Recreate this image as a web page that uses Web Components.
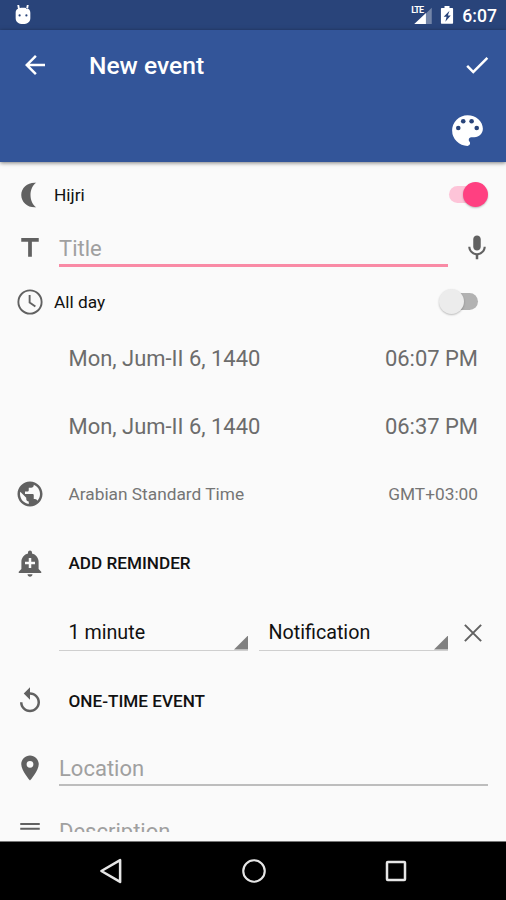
<!DOCTYPE html>
<html lang="en">
<head>
<meta charset="utf-8">
<title>New event</title>
<style>
    html, body { margin: 0; height: 100%; overflow: hidden; }
    body { font-family: Roboto, "Liberation Sans", sans-serif; background: #fafafa; }
</style>
</head>
<body>
<event-screen></event-screen>
<script>
class BaseElement extends HTMLElement {
    constructor() {
        super();
        this.attachShadow({ mode: 'open' });
    }

    connectedCallback() {
        const template = document.createElement('template');
        template.innerHTML = `<style>${this.style_}</style>${this.html}`;
        this.shadowRoot.innerHTML = '';
        this.shadowRoot.appendChild(template.content.cloneNode(true));
    }

    get style_() { return ''; }
    get html() { return '<slot></slot>'; }
}

const ICONS = {
    back: '<path d="M20 11H7.83l5.59-5.59L12 4l-8 8 8 8 1.41-1.41L7.83 13H20v-2z"/>',
    check: '<path d="M9 16.17L4.83 12l-1.42 1.41L9 19 21 7l-1.41-1.41z"/>',
    palette: '<path d="M12 3a9 9 0 0 0 0 18c.83 0 1.5-.67 1.5-1.5 0-.39-.15-.74-.39-1.01-.23-.26-.38-.61-.38-.99 0-.83.67-1.5 1.5-1.5H16c2.76 0 5-2.24 5-5 0-4.42-4.03-8-9-8z"/><g fill="#29447a"><circle cx="6.6" cy="10.5" r="1.35"/><circle cx="9.5" cy="6.6" r="1.35"/><circle cx="14.4" cy="6.6" r="1.35"/><circle cx="17.4" cy="10.5" r="1.35"/></g>',
    moon: '<path d="M17 2.2C10.5 1.5 5 6 5 12s5.5 10.5 12 9.8C14.4 20.3 12.400 16.500 12.400 12s2-8.300 4.600-9.800z"/>',
    title: '<path d="M5 4v3h5.5v12h3V7H19V4z"/>',
    mic: '<path d="M12 14c1.66 0 2.99-1.34 2.99-3L15 5c0-1.66-1.34-3-3-3S9 3.34 9 5v6c0 1.66 1.34 3 3 3zm5.3-3c0 3-2.54 5.1-5.3 5.1S6.7 14 6.7 11H5c0 3.41 2.72 6.23 6 6.72V21h2v-3.28c3.28-.48 6-3.3 6-6.72h-1.7z"/>',
    clock: '<g fill="none" stroke="currentColor" stroke-width="1.5"><circle cx="12" cy="12" r="9.3"/><path d="M11.7 6.4v6l4.6 3.2"/></g>',
    globe: '<path d="M12 2C6.48 2 2 6.48 2 12s4.48 10 10 10 10-4.48 10-10S17.52 2 12 2zm-1 17.93c-3.95-.49-7-3.85-7-7.93 0-.62.08-1.21.21-1.79L9 15v1c0 1.1.9 2 2 2v1.93zm6.9-2.54c-.26-.81-1-1.39-1.9-1.39h-1v-3c0-.55-.45-1-1-1H8v-2h2c.55 0 1-.45 1-1V7h2c1.1 0 2-.9 2-2v-.41c2.93 1.19 5 4.06 5 7.41 0 2.08-.8 3.97-2.1 5.39z"/>',
    alert: '<path d="M10.01 21.01c0 1.1.89 1.99 1.99 1.99s1.99-.89 1.99-1.99h-3.98zm8.87-4.19V11c0-3.25-2.25-5.97-5.29-6.69v-.72C13.59 2.71 12.88 2 12 2s-1.59.71-1.59 1.59v.72C7.37 5.03 5.12 7.75 5.12 11v5.82L3 18.94V20h18v-1.06l-2.12-2.12zM16 13.01h-3v3h-2v-3H8V11h3V8h2v3h3v2.01z"/>',
    replay: '<path d="M12 5V1L7 6l5 5V7c3.31 0 6 2.69 6 6s-2.69 6-6 6-6-2.69-6-6H4c0 4.42 3.58 8 8 8s8-3.58 8-8-3.58-8-8-8z"/>',
    place: '<path d="M12 2C8.13 2 5 5.13 5 9c0 5.25 7 13 7 13s7-7.75 7-13c0-3.87-3.13-7-7-7zm0 9.7a2.7 2.7 0 1 1 0-5.4 2.7 2.7 0 0 1 0 5.4z"/>',
    lines: '<path d="M4.2 5.5h15.6v1.7H4.2zM4.2 9.3h15.6V11H4.2zM4.2 13.9h15.6v1.7H4.2z"/>',
    close: '<path fill="none" stroke="currentColor" stroke-width="1.6" d="M5.5 5.5l13 13M18.5 5.5l-13 13"/>',
    android: '<path d="M4 9.5C4 5.5 7 4 12 4s8 1.5 8 5.500v6c0 4-3.300 6.300-8 6.300s-8-2.300-8-6.300zM5.800 1l2 .2.900 4.300h-2.200zM18.200 1l-2 .2-.9 4.300h2.200z"/><circle cx="8.300" cy="12.500" r="1.200" fill="#29447a"/><circle cx="15.700" cy="12.500" r="1.200" fill="#29447a"/>',
    signal: '<path opacity=".35" d="M22.5 2v19.5h-7V9z"/><path d="M15.5 8.5v13h-14z"/>',
    battery: '<path fill-rule="evenodd" d="M9 1.2h6v2.3h3c.8 0 1.3.5 1.3 1.2v16.6c0 .8-.5 1.3-1.3 1.3H6c-.8 0-1.3-.5-1.3-1.3V4.7c0-.8.5-1.2 1.3-1.2h3zM15 7l-7 7h3.5L10 20l6.5-7.5H13z"/>',
    navBack: '<path fill="none" stroke="currentColor" stroke-width="2" stroke-linejoin="round" d="M19.3 3.3v17.4L4.3 12z"/>',
    navHome: '<circle cx="12" cy="12" r="8.6" fill="none" stroke="currentColor" stroke-width="1.7"/>',
    navRecent: '<rect x="4.8" y="4.8" width="14.4" height="14.4" rx=".6" fill="none" stroke="currentColor" stroke-width="2"/>',
};

class AppIcon extends BaseElement {
    get style_() {
        return `
            :host { display: block; flex: none; width: var(--size, 30px); height: var(--size, 30px); }
            svg { display: block; width: 100%; height: 100%; fill: currentColor; }
        `;
    }
    get html() {
        return `<svg viewBox="0 0 24 24">${ICONS[this.getAttribute('name')]}</svg>`;
    }
}

class StatusBar extends BaseElement {
    get style_() {
        return `
            :host { display: flex; align-items: center; height: 30px; padding: 0 9px 0 12px; box-sizing: border-box; background: #29447a; color: #fff; }
            .robot { --size: 22px; }
            .signal { display: grid; width: 23px; height: 20px; margin-left: auto; }
            .signal > * { grid-area: 1 / 1; }
            .signal app-icon { --size: 20px; justify-self: end; align-self: end; margin-bottom: -1px; }
            .lte { font-size: 9px; font-weight: 700; line-height: 9px; letter-spacing: -0.9px; margin: 1px 0 0 1px; z-index: 1; }
            .battery { --size: 20px; margin-left: 4px; }
            .time { font-size: 17.6px; font-weight: 500; margin: 2px 0 0 5px; }
        `;
    }
    get html() {
        return `
            <app-icon class="robot" name="android"></app-icon>
            <div class="signal"><app-icon name="signal"></app-icon><span class="lte">LTE</span></div>
            <app-icon class="battery" name="battery"></app-icon>
            <span class="time"><slot></slot></span>
        `;
    }
}

class AppHeader extends BaseElement {
    get style_() {
        return `
            :host { display: block; height: 132px; background: #335599; color: #fff; box-shadow: 0 1px 4px rgba(0, 0, 0, .5); position: relative; z-index: 1; }
            .bar { display: flex; align-items: center; height: 70px; padding: 0 14px 0 20px; }
            .title { flex: 1; margin-left: 39px; padding-top: 1px; font-size: 24.6px; font-weight: 500; }
            .tools { display: flex; justify-content: flex-end; padding: 10px 18px 0 0; }
            .tools app-icon { --size: 41px; }
        `;
    }
    get html() {
        return `
            <div class="bar">
                <app-icon name="back"></app-icon>
                <span class="title"><slot></slot></span>
                <app-icon name="check"></app-icon>
            </div>
            <div class="tools"><app-icon name="palette"></app-icon></div>
        `;
    }
}

class FormRow extends BaseElement {
    get style_() {
        return `
            :host { display: flex; align-items: center; flex: none; box-sizing: border-box; padding: 0 28px 0 15px; color: #111; font-size: 17.3px; }
            .lead { flex: none; width: 30px; margin-right: var(--gap, 23.5px); color: #616161; }
            slot { display: flex; flex: 1; align-items: center; justify-content: space-between; min-width: 0; }
        `;
    }
    get html() {
        const icon = this.getAttribute('icon');
        return `
            <div class="lead">${icon ? `<app-icon name="${icon}"></app-icon>` : ''}</div>
            <slot></slot>
        `;
    }
}

class ToggleSwitch extends BaseElement {
    get style_() {
        return `
            :host { display: grid; align-items: center; width: 39px; height: 26px; }
            .track, .thumb { grid-area: 1 / 1; }
            .track { width: 35px; height: 17px; border-radius: 9px; background: #b2b2b2; justify-self: end; }
            .thumb { width: 25px; height: 25px; border-radius: 50%; background: #ececec; box-shadow: 0 1px 2px rgba(0, 0, 0, .25); justify-self: start; }
            :host([checked]) .track { background: #fdc4d8; justify-self: start; }
            :host([checked]) .thumb { background: #ff4081; justify-self: end; }
        `;
    }
    get html() {
        return '<div class="track"></div><div class="thumb"></div>';
    }
}

class TextField extends BaseElement {
    get style_() {
        return `
            :host { display: block; flex: 1; height: 36px; box-sizing: border-box; line-height: 37px; font-size: 22px; color: #a0a0a0; border-bottom: 2px solid #bdbdbd; }
            :host([focused]) { height: 38px; line-height: 39px; border-bottom: 3px solid #f98aa5; }
        `;
    }
}

class DropDown extends BaseElement {
    get style_() {
        return `
            :host { display: flex; flex: none; align-items: flex-end; justify-content: space-between; width: 189px; height: 36px; box-sizing: border-box; padding-left: 9.5px; border-bottom: 1px solid #cfcfcf; font-size: 19.7px; line-height: 34px; }
            .arrow { width: 14px; height: 14px; background: #808080; clip-path: polygon(100% 0, 100% 100%, 0 100%); }
        `;
    }
    get html() {
        return '<slot></slot><div class="arrow"></div>';
    }
}

class NavBar extends BaseElement {
    get style_() {
        return `
            :host { display: flex; align-items: center; justify-content: space-between; height: 59px; box-sizing: border-box; padding: 0 95px 0 96px; border-top: 1px solid #777; background: #000; color: #e6e6e6; }
        `;
    }
    get html() {
        return `
            <app-icon name="navBack"></app-icon>
            <app-icon name="navHome"></app-icon>
            <app-icon name="navRecent"></app-icon>
        `;
    }
}

class EventScreen extends BaseElement {
    get style_() {
        return `
            :host { display: flex; flex-direction: column; width: 506px; height: 900px; background: #fafafa; }
            .form { display: flex; flex-direction: column; height: 665px; padding-top: 5px; margin-bottom: 9px; overflow: hidden; }
            .label { --gap: 9px; padding-right: 18px; }
            .date { font-size: 21.95px; color: #6c6c6c; }
            .zone { color: #757575; }
            .action { font-size: 17.15px; font-weight: 500; }
            .field { --gap: 14px; padding-right: 18px; }
            .mic { color: #616161; margin: 0 -4px 0 14px; }
            .close { color: #616161; margin: 0 0 0 10px; }
            .field drop-down + drop-down { margin-left: 11px; }
        `;
    }
    get html() {
        return `
            <status-bar>6:07</status-bar>
            <app-header>New event</app-header>
            <div class="form">
                <form-row class="label" icon="moon" style="height: 55px"><span>Hijri</span><toggle-switch checked></toggle-switch></form-row>
                <form-row class="field" icon="title" style="height: 52px"><text-field focused>Title</text-field><app-icon class="mic" name="mic"></app-icon></form-row>
                <form-row class="label" icon="clock" style="height: 55px; padding-right: 28px"><span>All day</span><toggle-switch></toggle-switch></form-row>
                <form-row class="date" style="height: 58px"><span>Mon, Jum-II 6, 1440</span><span>06:07 PM</span></form-row>
                <form-row class="date" style="height: 78px"><span>Mon, Jum-II 6, 1440</span><span>06:37 PM</span></form-row>
                <form-row class="zone" icon="globe" style="height: 58px"><span>Arabian Standard Time</span><span>GMT+03:00</span></form-row>
                <form-row class="action" icon="alert" style="height: 80px"><span>ADD REMINDER</span></form-row>
                <form-row class="field" style="height: 59px"><drop-down>1 minute</drop-down><drop-down>Notification</drop-down><app-icon class="close" name="close"></app-icon></form-row>
                <form-row class="action" icon="replay" style="height: 77px"><span>ONE-TIME EVENT</span></form-row>
                <form-row class="field" icon="place" style="height: 58px"><text-field>Location</text-field></form-row>
                <form-row class="field" icon="lines" style="height: 68px"><text-field>Description</text-field></form-row>
            </div>
            <nav-bar></nav-bar>
        `;
    }
}

customElements.define('app-icon', AppIcon);
customElements.define('status-bar', StatusBar);
customElements.define('app-header', AppHeader);
customElements.define('form-row', FormRow);
customElements.define('toggle-switch', ToggleSwitch);
customElements.define('text-field', TextField);
customElements.define('drop-down', DropDown);
customElements.define('nav-bar', NavBar);
customElements.define('event-screen', EventScreen);
</script>
</body>
</html>
